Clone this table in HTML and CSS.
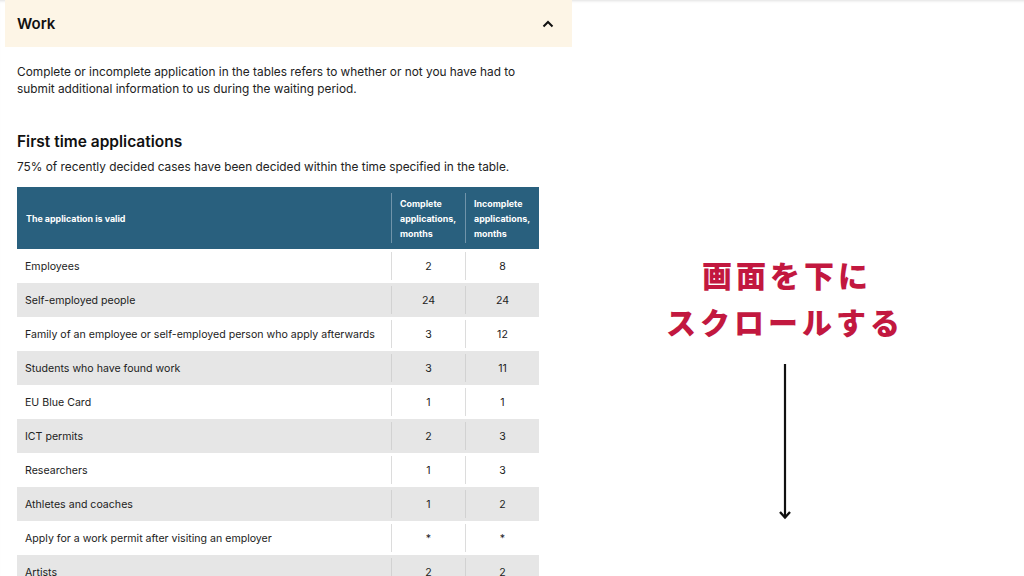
FILE: index.html
```html
<!DOCTYPE html>
<html lang="en">
<head>
<meta charset="utf-8">
<title>Work</title>
<link rel="stylesheet" href="styles.css">
</head>
<body>
<div class="page">
  <main class="content">
    <div class="accordion-head">
      <span class="accordion-title">Work</span>
      <svg class="chevron" width="12" height="8" viewBox="0 0 12 8"><path d="M1.5 6.5 L6 2 L10.5 6.5" fill="none" stroke="#111" stroke-width="2"/></svg>
    </div>
    <div class="body">
      <p class="intro">Complete or incomplete application in the tables refers to whether or not you have had to submit additional information to us during the waiting period.</p>
      <h2 class="section-title">First time applications</h2>
      <p class="note">75% of recently decided cases have been decided within the time specified in the table.</p>
      <div class="table">
        <div class="row head">
          <div class="cell name">The application is valid</div>
          <div class="cell num">Complete applications, months</div>
          <div class="cell num">Incomplete applications, months</div>
        </div>
        <div class="row"><div class="cell name">Employees</div><div class="cell num">2</div><div class="cell num">8</div></div>
        <div class="row alt"><div class="cell name">Self-employed people</div><div class="cell num">24</div><div class="cell num">24</div></div>
        <div class="row"><div class="cell name">Family of an employee or self-employed person who apply afterwards</div><div class="cell num">3</div><div class="cell num">12</div></div>
        <div class="row alt"><div class="cell name">Students who have found work</div><div class="cell num">3</div><div class="cell num">11</div></div>
        <div class="row"><div class="cell name">EU Blue Card</div><div class="cell num">1</div><div class="cell num">1</div></div>
        <div class="row alt"><div class="cell name">ICT permits</div><div class="cell num">2</div><div class="cell num">3</div></div>
        <div class="row"><div class="cell name">Researchers</div><div class="cell num">1</div><div class="cell num">3</div></div>
        <div class="row alt"><div class="cell name">Athletes and coaches</div><div class="cell num">1</div><div class="cell num">2</div></div>
        <div class="row"><div class="cell name">Apply for a work permit after visiting an employer</div><div class="cell num">*</div><div class="cell num">*</div></div>
        <div class="row alt"><div class="cell name">Artists</div><div class="cell num">2</div><div class="cell num">2</div></div>
      </div>
    </div>
  </main>
  <aside class="annotation">
    <p class="callout">画面を下に<br>スクロールする</p>
    <svg class="arrow" width="14" height="156" viewBox="0 0 14 156"><path d="M7 0 V154" stroke="#111" stroke-width="2.2" fill="none"/><path d="M2 148 L7 153.5 L12 148" stroke="#111" stroke-width="2.4" fill="none"/></svg>
  </aside>
</div>
</body>
</html>
```
FILE: styles.css
```css
* { box-sizing: border-box; }
html, body { margin: 0; padding: 0; }
body {
  background: #fff;
  font-family: Inter, "Liberation Sans", sans-serif;
  color: #1a1a1a;
  width: 1024px;
  height: 576px;
  overflow: hidden;
}
.page {
  display: flex;
  height: 576px;
  box-shadow: inset 0 3px 3px -2px rgba(0,0,0,0.12);
}
.content {
  width: 572px;
  flex: none;
  padding-left: 5px;
}
.accordion-head {
  height: 47px;
  background: #fdf5e6;
  display: flex;
  align-items: center;
  justify-content: space-between;
  padding: 0 18px 0 12px;
}
.accordion-title {
  font-size: 15px;
  font-weight: 600;
  color: #111;
}
.chevron { display: block; }
.body {
  padding: 17px 0 0 12px;
}
.intro {
  margin: 0;
  font-size: 11.85px;
  line-height: 17px;
  color: #222;
  width: 530px;
}
.section-title {
  margin: 34px 0 0;
  font-size: 15.5px;
  font-weight: 600;
  line-height: 20px;
  color: #111;
}
.note {
  margin: 7px 0 0;
  font-size: 11.85px;
  line-height: 17px;
  color: #222;
}
.table {
  margin-top: 11px;
  width: 522px;
}
.row {
  display: grid;
  grid-template-columns: 374px 74px 74px;
  height: 34px;
  padding: 3px 0;
  font-size: 10.6px;
  color: #222;
}
.row.alt { background: #e6e6e6; }
.cell {
  display: flex;
  align-items: center;
}
.cell.name { padding-left: 8px; }
.cell.num {
  justify-content: center;
  border-left: 1px solid #dcdcdc;
}
.row.alt .cell.num { border-left-color: #d2d2d2; }
.row.head {
  height: 62px;
  padding: 6px 0;
  background: #29607e;
  color: #fff;
  font-size: 8.9px;
  font-weight: 700;
  line-height: 15px;
}
.row.head .cell.name { padding-left: 9px; }
.row.head .cell.num {
  justify-content: flex-start;
  padding-left: 8px;
  border-left: 1px solid #7094aa;
}
.annotation {
  width: 426px;
  flex: none;
  display: flex;
  flex-direction: column;
  align-items: center;
  padding-top: 251px;
}
.callout {
  margin: 0;
  font-family: "Noto Sans CJK JP", sans-serif;
  font-weight: 900;
  font-size: 30px;
  line-height: 47px;
  letter-spacing: 4px;
  text-indent: 4px;
  color: #c2183f;
  text-align: center;
}
.arrow {
  display: block;
  margin-top: 19px;
}
```
